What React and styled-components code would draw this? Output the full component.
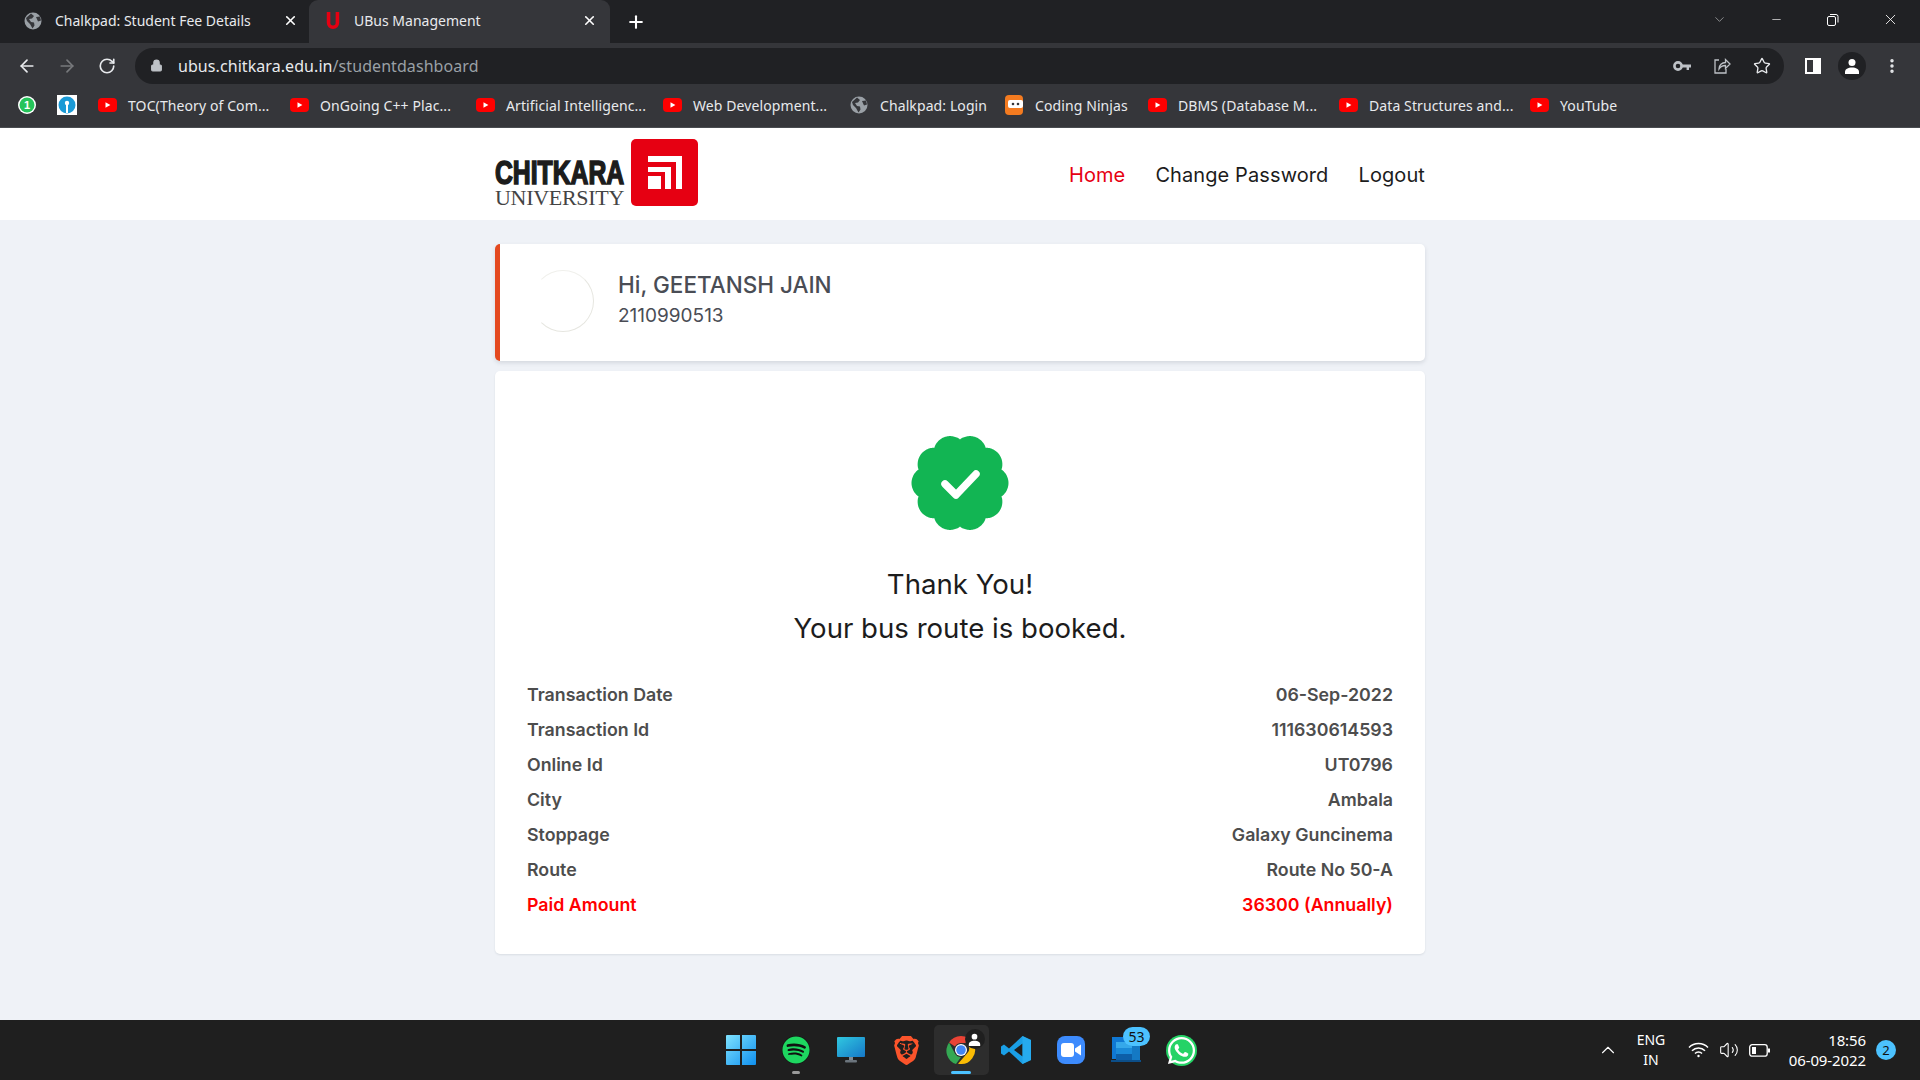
import React from 'react';
import styled, { createGlobalStyle } from 'styled-components';
import { ArrowLeft, ArrowRight, RotateCw, Lock, Star, Plus, X, Minus, ChevronDown, ChevronUp, EllipsisVertical, Volume2 } from 'lucide-react';
import { FaSpotify, FaWhatsapp } from 'react-icons/fa';
import { SiBrave } from 'react-icons/si';

const GlobalStyle = createGlobalStyle`
  html, body { margin: 0; padding: 0; background: #eff2f7; }
  * { box-sizing: border-box; }
  body { font-family: "Inter", sans-serif; }
`;

const UI_FONT = '"Noto Sans", "Open Sans", sans-serif';

const bookmarks = [
  { label: 'TOC(Theory of Com...', kind: 'yt', width: 192 },
  { label: 'OnGoing C++ Plac...', kind: 'yt', width: 186 },
  { label: 'Artificial Intelligenc...', kind: 'yt', width: 187 },
  { label: 'Web Development...', kind: 'yt', width: 187 },
  { label: 'Chalkpad: Login', kind: 'globe', width: 155 },
  { label: 'Coding Ninjas', kind: 'ninja', width: 143 },
  { label: 'DBMS (Database M...', kind: 'yt', width: 191 },
  { label: 'Data Structures and...', kind: 'yt', width: 191 },
  { label: 'YouTube', kind: 'yt', width: 100 },
];

const details = [
  ['Transaction Date', '06-Sep-2022'],
  ['Transaction Id', '111630614593'],
  ['Online Id', 'UT0796'],
  ['City', 'Ambala'],
  ['Stoppage', 'Galaxy Guncinema'],
  ['Route', 'Route No 50-A'],
];

// ten round lobes with narrow dips, same outline as the verified badge
const badgePath = () => {
  const pts = [];
  for (let i = 0; i < 360; i++) {
    const t = (i / 360) * Math.PI * 2;
    const r = 43.5 + 5 * Math.pow(Math.abs(Math.cos(5 * t)), 0.8);
    pts.push(`${(50 + r * Math.cos(t)).toFixed(2)} ${(50 + r * Math.sin(t)).toFixed(2)}`);
  }
  return `M${pts.join('L')}Z`;
};

const GlobeIcon = ({ size = 18 }) => (
  <svg width={size} height={size} viewBox="0 0 18 18">
    <circle cx="9" cy="9" r="8.5" fill="#9aa0a6" />
    <path d="M7 1.5 10 4 8 6.5 5 7 7 10l3 .5 .5 3-2 3L6 12 3 9 2 6zM12 5l4-.5 1 4-3 1z" fill="#35363a" />
  </svg>
);

const YtIcon = () => (
  <svg width="19" height="14" viewBox="0 0 19 14">
    <rect width="19" height="14" rx="4" fill="#f00" />
    <path d="M7.5 4.2 12.4 7 7.5 9.8z" fill="#fff" />
  </svg>
);

const NinjaIcon = () => (
  <svg width="18" height="20" viewBox="0 0 18 20">
    <rect width="18" height="20" rx="4" fill="#f47b20" />
    <rect x="3" y="5" width="15" height="8" rx="2" fill="#fff" />
    <circle cx="8" cy="9" r="1.3" fill="#35363a" />
    <circle cx="13" cy="9" r="1.3" fill="#35363a" />
  </svg>
);

const bookmarkIcons = { yt: <YtIcon />, globe: <GlobeIcon />, ninja: <NinjaIcon /> };

const App = () => (
  <Screen>
    <GlobalStyle />
    <TabStrip>
      <Tab>
        <GlobeIcon />
        <TabTitle>Chalkpad: Student Fee Details</TabTitle>
        <X size={15} strokeWidth={2.6} color="#fff" />
      </Tab>
      <Tab $active>
        <svg width="16" height="20" viewBox="0 0 18 20">
          <path d="M2 0h4v12a3 3 0 0 0 6 0V0h4v12a7 7 0 0 1-14 0z" fill="#e60012" />
        </svg>
        <TabTitle>UBus Management</TabTitle>
        <X size={15} strokeWidth={2.6} color="#fff" />
      </Tab>
      <NewTab><Plus size={20} strokeWidth={2.5} color="#fff" /></NewTab>
      <WindowControls>
        <ChevronDown size={15} strokeWidth={1} color="#c8cacc" />
        <Minus size={13} strokeWidth={1.2} color="#fff" />
        <svg width="13" height="13" viewBox="0 0 13 13" fill="none" stroke="#fff" strokeWidth="1">
          <rect x="1.5" y="3.5" width="8" height="9" rx="1.5" />
          <path d="M4 1.5h6a2 2 0 0 1 2 2v6" />
        </svg>
        <X size={17} strokeWidth={1.2} color="#fff" />
      </WindowControls>
    </TabStrip>

    <Toolbar>
      <NavButtons>
        <ArrowLeft size={20} color="#e8eaed" />
        <ArrowRight size={20} color="#77797c" />
        <RotateCw size={18} color="#e8eaed" strokeWidth={2.2} />
      </NavButtons>
      <Omnibox>
        <Lock size={13} color="#bdc1c6" fill="#bdc1c6" />
        <Url>ubus.chitkara.edu.in<UrlPath>/studentdashboard</UrlPath></Url>
        <OmniIcons>
          <svg width="18" height="12" viewBox="0 0 18 12">
            <circle cx="5" cy="6" r="3.6" fill="none" stroke="#bdc1c6" strokeWidth="2.6" />
            <path d="M8 4.6h10v2.8h-2v2.6h-2.4V7.4H8z" fill="#bdc1c6" />
          </svg>
          <svg width="18" height="18" viewBox="0 0 18 18" fill="none" stroke="#bdc1c6" strokeWidth="1.3">
            <path d="M6 3H2v13h11v-4" />
            <path d="M6 12c0-4 3-6.5 6.5-6.500V2.500L17 7l-4.500 4.500V8.500C9.500 8.500 7.500 9.500 6 12z" />
          </svg>
          <Star size={18} color="#e8eaed" strokeWidth={1.8} />
        </OmniIcons>
      </Omnibox>
      <ToolIcons>
        <svg width="16" height="16" viewBox="0 0 16 16">
          <path fillRule="evenodd" d="M0 0h16v16H0zM2 2v12h6V2z" fill="#fff" />
        </svg>
        <ProfileChip>
          <svg width="16" height="16" viewBox="0 0 16 16" fill="#fff">
            <circle cx="8" cy="4.500" r="3.500" />
            <path d="M1 16v-2c0-3 3-4.500 7-4.500s7 1.500 7 4.500v2z" />
          </svg>
        </ProfileChip>
        <EllipsisVertical size={18} color="#e8eaed" strokeWidth={2.6} />
      </ToolIcons>
    </Toolbar>

    <BookmarkBar>
      <BookmarkSlot $w={40}>
        <svg width="20" height="20" viewBox="0 0 20 20">
          <circle cx="10" cy="10" r="9" fill="#fff" />
          <circle cx="10" cy="10" r="7.500" fill="#25c45a" />
          <text x="10" y="14" textAnchor="middle" fontSize="11" fontWeight="700" fill="#fff" fontFamily="Liberation Sans">1</text>
        </svg>
      </BookmarkSlot>
      <BookmarkSlot $w={41}>
        <svg width="20" height="20" viewBox="0 0 20 20">
          <rect width="20" height="20" fill="#fff" />
          <circle cx="10" cy="10" r="8.500" fill="#1a9ad6" />
          <circle cx="10" cy="8" r="2.200" fill="#fff" />
          <rect x="9" y="9" width="2" height="9" fill="#fff" />
        </svg>
      </BookmarkSlot>
      {bookmarks.map(b => (
        <BookmarkSlot key={b.label} $w={b.width}>
          <BookmarkIcon>{bookmarkIcons[b.kind]}</BookmarkIcon>
          <BookmarkLabel>{b.label}</BookmarkLabel>
        </BookmarkSlot>
      ))}
    </BookmarkBar>

    <Page>
      <NavBar>
        <NavInner>
          <Logo>
            <LogoWords>
              <LogoBig>CHITKARA</LogoBig>
              <LogoSmall>UNIVERSITY</LogoSmall>
            </LogoWords>
            <LogoMark>
              <svg width="34" height="34" viewBox="0 0 34 34" fill="#fff">
                <path d="M0 0h34v33h-6V6H0z" />
                <path d="M0 11h23v22h-6V16H0z" />
                <rect y="20" width="13" height="13" />
              </svg>
            </LogoMark>
          </Logo>
          <NavLinks>
            <NavLink $active>Home</NavLink>
            <NavLink>Change Password</NavLink>
            <NavLink>Logout</NavLink>
          </NavLinks>
        </NavInner>
      </NavBar>

      <Content>
        <ProfileCard>
          <Avatar />
          <ProfileText>
            <Greeting>Hi, GEETANSH JAIN</Greeting>
            <RollNo>2110990513</RollNo>
          </ProfileText>
        </ProfileCard>

        <ReceiptCard>
          <Badge>
            <svg width="100" height="100" viewBox="0 0 100 100">
              <path d={badgePath()} fill="#12b553" />
              <path d="M35 51l11 11 20-21" fill="none" stroke="#fff" strokeWidth="7.500" strokeLinecap="round" strokeLinejoin="round" />
            </svg>
          </Badge>
          <ThankYou>Thank You!<br />Your bus route is booked.</ThankYou>
          <DetailList>
            {details.map(([k, v]) => (
              <DetailRow key={k}><span>{k}</span><span>{v}</span></DetailRow>
            ))}
            <DetailRow $paid><span>Paid Amount</span><span>36300 (Annually)</span></DetailRow>
          </DetailList>
        </ReceiptCard>
      </Content>
    </Page>

    <Taskbar>
      <div />
      <TaskIcons>
        <TaskIcon>
          <svg width="30" height="30" viewBox="0 0 30 30">
            <defs>
              <linearGradient id="win" x1="0" y1="0" x2="1" y2="1">
                <stop offset="0" stopColor="#7fe3ff" />
                <stop offset="1" stopColor="#0f8fee" />
              </linearGradient>
            </defs>
            <path d="M0 1a1 1 0 0 1 1-1h13v14H0zM16 0h13a1 1 0 0 1 1 1v13H16zM0 16h14v14H1a1 1 0 0 1-1-1zM16 16h14v13a1 1 0 0 1-1 1H16z" fill="url(#win)" />
          </svg>
        </TaskIcon>
        <TaskIcon $dot="#9a9a9a">
          <SpotifyDisc><FaSpotify size={28} color="#1ed760" /></SpotifyDisc>
        </TaskIcon>
        <TaskIcon>
          <svg width="28" height="26" viewBox="0 0 28 26">
            <defs>
              <linearGradient id="mon" x1="0" y1="0" x2="1" y2="1">
                <stop offset="0" stopColor="#30c8e0" />
                <stop offset="1" stopColor="#1678c8" />
              </linearGradient>
            </defs>
            <rect width="28" height="20" rx="1" fill="url(#mon)" />
            <rect x="12" y="20" width="4" height="3" fill="#7f8a94" />
            <rect x="8" y="23" width="12" height="2.500" rx="1" fill="#6b747c" />
          </svg>
        </TaskIcon>
        <TaskIcon><SiBrave size={29} color="#fb542b" /></TaskIcon>
        <TaskIcon $active $dot="#4cc2ff">
          <svg width="30" height="30" viewBox="0 0 30 30">
            <path d="M15 1a14 14 0 0 1 12.100 7H15a7 7 0 0 0-6.100 3.500L3.100 7.500A14 14 0 0 1 15 1z" fill="#ea4335" />
            <path d="M3.100 7.500 8.900 18.500a7 7 0 0 0 6.100 3.500l-5 7.100A14 14 0 0 1 3.100 7.500z" fill="#34a853" />
            <path d="M27.100 8A14 14 0 0 1 12 28.700L21 18.500a7 7 0 0 0 0-10.500z" fill="#fbbc04" />
            <circle cx="15" cy="15" r="6" fill="#fff" />
            <circle cx="15" cy="15" r="4.800" fill="#4285f4" />
          </svg>
          <UserOverlay>
            <svg width="13" height="13" viewBox="0 0 16 16" fill="#fff">
              <circle cx="8" cy="4.500" r="3.500" />
              <path d="M1 16v-2c0-3 3-4.500 7-4.500s7 1.500 7 4.500v2z" />
            </svg>
          </UserOverlay>
        </TaskIcon>
        <TaskIcon>
          <svg width="30" height="30" viewBox="0 0 30 30">
            <path d="M21.500 1 30 5v20l-8.500 4L8 16.500 3 20.500 0 18.500V11.500l3-2 5 4zM21.500 8.500 13 15l8.500 6.500z" fill="#1a9fe6" />
            <path d="M21.500 1 30 5v20l-8.500 4z" fill="#2cb0f2" fillOpacity=".7" />
          </svg>
        </TaskIcon>
        <TaskIcon>
          <ZoomTile>
            <svg width="20" height="14" viewBox="0 0 20 14" fill="#fff">
              <rect width="13" height="14" rx="3" />
              <path d="M14 5.500 20 1.500v11l-6-4z" />
            </svg>
          </ZoomTile>
        </TaskIcon>
        <TaskIcon>
          <svg width="30" height="26" viewBox="0 0 30 26">
            <rect x="1" y="0" width="20" height="22" fill="#0f78d4" />
            <rect x="5" y="5" width="16" height="6" fill="#35a8ea" />
            <rect x="5" y="11" width="16" height="6" fill="#1a8ad8" />
            <rect x="5" y="17" width="16" height="6" fill="#0d5fa8" />
            <rect x="21" y="4" width="8" height="19" fill="#1479c4" />
            <rect x="0" y="23" width="30" height="2" fill="#0c4e88" />
          </svg>
          <CountPill>53</CountPill>
        </TaskIcon>
        <TaskIcon>
          <WhatsappDisc><FaWhatsapp size={31} color="#fff" /></WhatsappDisc>
        </TaskIcon>
      </TaskIcons>
      <Tray>
        <ChevronUp size={22} strokeWidth={1.2} color="#fff" />
        <Lang>ENG<br />IN</Lang>
        <TrayIcons>
          <svg width="21" height="16" viewBox="0 0 21 16" fill="none" stroke="#fff" strokeWidth="1.500">
            <path d="M1 5.500a13.500 13.500 0 0 1 19 0M4 8.700a9 9 0 0 1 13 0M7 11.500a4.800 4.800 0 0 1 7 0" />
            <circle cx="10.500" cy="14" r="1.200" fill="#fff" stroke="none" />
          </svg>
          <Volume2 size={20} strokeWidth={1.300} color="#fff" />
          <svg width="21" height="13" viewBox="0 0 21 13" fill="none" stroke="#fff" strokeWidth="1.300">
            <rect x=".7" y=".7" width="17.500" height="11.500" rx="2.500" />
            <rect x="3" y="3" width="4" height="7" fill="#fff" stroke="none" />
            <path d="M20 4.500v4" strokeWidth="2" />
          </svg>
        </TrayIcons>
        <Clock>18:56<br />06-09-2022</Clock>
        <NotifyDot>2</NotifyDot>
      </Tray>
    </Taskbar>
  </Screen>
);

export default App;

const Screen = styled.div`
  display: flex;
  flex-direction: column;
  width: 1920px;
  height: 1080px;
  overflow: hidden;
`;

const TabStrip = styled.div`
  display: flex;
  align-items: flex-end;
  height: 43px;
  padding-left: 8px;
  background: #202124;
`;

const Tab = styled.div`
  display: flex;
  align-items: center;
  gap: 13px;
  width: 301px;
  height: 43px;
  padding: 0 ${p => (p.$active ? 13 : 11)}px 2px 16px;
  border-radius: 9px 9px 0 0;
  background: ${p => (p.$active ? '#35363a' : 'transparent')};
`;

const TabTitle = styled.span`
  flex: 1;
  font: 14px ${UI_FONT};
  color: #e8eaed;
  white-space: nowrap;
`;

const NewTab = styled.div`
  display: flex;
  align-items: center;
  justify-content: center;
  width: 52px;
  height: 43px;
`;

const WindowControls = styled.div`
  display: flex;
  align-items: center;
  gap: 43px;
  height: 38px;
  margin-left: auto;
  padding-right: 21px;
  align-self: flex-start;
`;

const Toolbar = styled.div`
  display: flex;
  align-items: center;
  height: 45px;
  padding: 0 14px 0 17px;
  background: #35363a;
`;

const NavButtons = styled.div`
  display: flex;
  align-items: center;
  gap: 20px;
  width: 118px;
  svg:last-child { margin-left: 1px; }
`;

const Omnibox = styled.div`
  display: flex;
  align-items: center;
  flex: none;
  width: 1649px;
  height: 36px;
  padding: 0 13px 0 15px;
  border-radius: 18px;
  background: #202124;
`;

const Url = styled.span`
  margin-left: 15px;
  font: 16px ${UI_FONT};
  letter-spacing: 0.07px;
  color: #e8eaed;
`;

const UrlPath = styled.span`
  color: #9aa0a6;
`;

const OmniIcons = styled.div`
  display: flex;
  align-items: center;
  gap: 22px;
  margin-left: auto;
`;

const ToolIcons = styled.div`
  display: flex;
  align-items: center;
  gap: 17px;
  margin-left: 21px;
`;

const ProfileChip = styled.div`
  display: flex;
  align-items: center;
  justify-content: center;
  width: 28px;
  height: 28px;
  border-radius: 50%;
  background: #202124;
`;

const BookmarkBar = styled.div`
  display: flex;
  align-items: center;
  height: 40px;
  padding: 0 0 5px 17px;
  background: #35363a;
  border-bottom: 1px solid #494c50;
`;

const BookmarkSlot = styled.div`
  display: flex;
  align-items: center;
  flex: none;
  width: ${p => p.$w}px;
`;

const BookmarkIcon = styled.span`
  display: flex;
  width: 30px;
  flex: none;
`;

const BookmarkLabel = styled.span`
  font: 14px ${UI_FONT};
  letter-spacing: 0.1px;
  color: #e8eaed;
  white-space: nowrap;
`;

const Page = styled.div`
  flex: 1;
  display: flex;
  flex-direction: column;
  background: #eff2f7;
`;

const NavBar = styled.header`
  display: flex;
  justify-content: center;
  height: 92px;
  background: #fff;
`;

const NavInner = styled.div`
  display: flex;
  align-items: center;
  justify-content: space-between;
  width: 930px;
  padding-bottom: 3px;
`;

const Logo = styled.div`
  display: flex;
  align-items: flex-end;
  gap: 7px;
  height: 67px;
`;

const LogoWords = styled.div`
  display: flex;
  flex-direction: column;
  width: 129px;
  margin-bottom: -2px;
  overflow: visible;
`;

const LogoBig = styled.span`
  font: 900 33px/30px "Liberation Sans", sans-serif;
  color: #1c1c1c;
  -webkit-text-stroke: 1.6px #1c1c1c;
  white-space: nowrap;
  transform: scaleX(0.75);
  transform-origin: left center;
`;

const LogoSmall = styled.span`
  font: 22px/20px "Liberation Serif", serif;
  letter-spacing: -0.3px;
  color: #444;
`;

const LogoMark = styled.div`
  display: flex;
  align-items: center;
  justify-content: center;
  width: 67px;
  height: 67px;
  border-radius: 5px;
  background: #e60012;
`;

const NavLinks = styled.nav`
  display: flex;
  gap: 30px;
  margin-top: 5px;
`;

const NavLink = styled.a`
  font-size: 20px;
  letter-spacing: 0.1px;
  color: ${p => (p.$active ? '#e60012' : '#1c1c1c')};
`;

const Content = styled.main`
  display: flex;
  flex-direction: column;
  gap: 10px;
  width: 930px;
  margin: 24px auto 0;
`;

const ProfileCard = styled.section`
  display: flex;
  align-items: center;
  gap: 24px;
  height: 117px;
  padding-left: 32px;
  border-left: 5px solid #e4491f;
  border-radius: 5px;
  background: #fff;
  box-shadow: 0 2px 4px rgba(60, 70, 90, 0.15);
`;

const Avatar = styled.div`
  width: 62px;
  height: 62px;
  margin-bottom: 3px;
  border-radius: 50%;
  border: 1px solid #f0f0ec;
  border-left-color: transparent;
  border-right-color: #e6e6e0;
  border-bottom-color: #e6e6e0;
`;

const ProfileText = styled.div`
  padding-bottom: 6px;
`;

const Greeting = styled.div`
  font-size: 22.5px;
  font-weight: 500;
  line-height: 32px;
  color: #4a4d55;
`;

const RollNo = styled.div`
  font-size: 19px;
  line-height: 30px;
  color: #4a4d55;
`;

const ReceiptCard = styled.section`
  display: flex;
  flex-direction: column;
  align-items: center;
  height: 583px;
  padding: 62px 32px 0;
  border-radius: 5px;
  background: #fff;
  box-shadow: 0 1px 2px rgba(60, 70, 90, 0.12);
`;

const Badge = styled.div`
  display: flex;
  height: 100px;
`;

const ThankYou = styled.h2`
  margin: 29px 0 0;
  font-size: 27.6px;
  font-weight: 400;
  line-height: 44px;
  text-align: center;
  color: #1c1c1c;
`;

const DetailList = styled.div`
  display: flex;
  flex-direction: column;
  align-self: stretch;
  margin-top: 27px;
`;

const DetailRow = styled.div`
  display: flex;
  justify-content: space-between;
  height: 35px;
  font-size: 17.8px;
  font-weight: 600;
  line-height: 35px;
  color: ${p => (p.$paid ? '#f00' : '#4d4d4d')};
`;

const Taskbar = styled.footer`
  display: grid;
  grid-template-columns: 1fr auto 1fr;
  align-items: center;
  height: 60px;
  background: #1f1f1f;
`;

const TaskIcons = styled.div`
  display: flex;
  align-items: center;
  padding-left: 2px;
`;

const TaskIcon = styled.div`
  position: relative;
  display: flex;
  align-items: center;
  justify-content: center;
  width: 55px;
  height: 50px;
  border-radius: 5px;
  background: ${p => (p.$active ? '#2d2d2d' : 'transparent')};
  &::after {
    content: '';
    display: ${p => (p.$dot ? 'block' : 'none')};
    position: absolute;
    bottom: 1px;
    left: 50%;
    width: ${p => (p.$active ? 20 : 8)}px;
    height: 3px;
    margin-left: ${p => (p.$active ? -10 : -4)}px;
    border-radius: 2px;
    background: ${p => p.$dot};
  }
`;

const SpotifyDisc = styled.div`
  display: flex;
  border-radius: 50%;
  background: #111;
`;

const UserOverlay = styled.div`
  position: absolute;
  top: 4px;
  right: 4px;
  display: flex;
  align-items: center;
  justify-content: center;
  width: 20px;
  height: 20px;
  border-radius: 50%;
  background: #1f1f1f;
`;

const ZoomTile = styled.div`
  display: flex;
  align-items: center;
  justify-content: center;
  width: 28px;
  height: 28px;
  border-radius: 8px;
  background: #3d8bfd;
`;

const CountPill = styled.div`
  position: absolute;
  top: 2px;
  right: 4px;
  padding: 0 5px;
  height: 19px;
  border-radius: 10px;
  background: #4cc2ff;
  font: 14px/19px ${UI_FONT};
  color: #111;
`;

const WhatsappDisc = styled.div`
  display: flex;
  border-radius: 50%;
  background: #25d366;
`;

const Tray = styled.div`
  display: flex;
  align-items: center;
  justify-content: flex-end;
  padding-right: 24px;
  color: #fff;
`;

const Lang = styled.div`
  width: 40px;
  margin: 0 17px 0 12px;
  font: 14px/20px ${UI_FONT};
  text-align: center;
`;

const TrayIcons = styled.div`
  display: flex;
  align-items: center;
  gap: 10px;
`;

const Clock = styled.div`
  width: 96px;
  font: 15px/20px ${UI_FONT};
  letter-spacing: -0.1px;
  text-align: right;
`;

const NotifyDot = styled.div`
  width: 20px;
  height: 20px;
  margin-left: 10px;
  border-radius: 50%;
  background: #4cc2ff;
  font: 13px/20px ${UI_FONT};
  text-align: center;
  color: #111;
`;
